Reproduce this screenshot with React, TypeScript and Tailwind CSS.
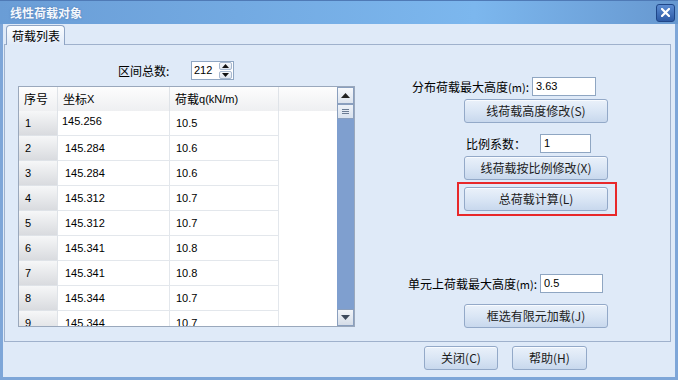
import React from "react"

const rows = [
  ["1", "145.256", "10.5"],
  ["2", "145.284", "10.6"],
  ["3", "145.284", "10.6"],
  ["4", "145.312", "10.7"],
  ["5", "145.312", "10.7"],
  ["6", "145.341", "10.8"],
  ["7", "145.341", "10.8"],
  ["8", "145.344", "10.7"],
  ["9", "145.344", "10.7"],
]

const cjk = "font-['Noto_Sans_CJK_SC','Microsoft_YaHei',sans-serif]"
const num = "font-['Liberation_Sans','Noto_Sans_CJK_SC',sans-serif]"

function Btn({ label, className = "" }: { label: string; className?: string }) {
  return (
    <button
      className={`h-[24px] flex items-center justify-center rounded-[3px] border border-[#93a9c8] bg-gradient-to-b from-[#eaf1fa] via-[#dae6f5] to-[#c8d8ed] text-[12px] text-[#1b1b1b] leading-none shadow-[inset_0_1px_0_#f8fbff] ${cjk} ${className}`}
    >
      {label}
    </button>
  )
}

function Field({ value, className = "" }: { value: string; className?: string }) {
  return (
    <div className={`h-[19px] bg-white border border-[#8fa6c2] flex items-center pl-[3px] text-[11px] text-black ${num} ${className}`}>
      {value}
    </div>
  )
}

export default function App() {
  return (
    <div className="w-[678px] h-[380px] flex flex-col bg-[#5d86bf] overflow-hidden select-none">
      {/* Title bar */}
      <div className="h-[24px] shrink-0 flex items-center justify-between pl-[10px] pr-[3px] border-t border-[#4f7ab6] bg-gradient-to-r from-[#6a9dd6] via-[#7cb7ee] via-70% to-[#6798d0]">
        <span className={`text-[12px] font-bold text-[#f4f8fd] [text-shadow:0_0_2px_#4a74ad] ${cjk}`}>线性荷载对象</span>
        <div className="w-[19px] h-[18px] rounded-[3px] border border-[#1f4688] bg-gradient-to-b from-[#5c8cd2] to-[#2d5aa5] flex items-center justify-center">
          <svg width="9" height="9" viewBox="0 0 9 9">
            <path d="M1 1 L8 8 M8 1 L1 8" stroke="white" strokeWidth="2.2" strokeLinecap="square" />
          </svg>
        </div>
      </div>

      {/* Body */}
      <div className="flex-1 flex flex-col bg-[#dfeaf8] border-x-[3px] border-b-[3px] border-[#7ea6d8]">
        {/* Tab strip */}
        <div className="h-[20px] shrink-0 flex items-end pl-[3px]">
          <div className={`h-[20px] w-[59px] -mb-px z-10 rounded-t-[4px] border border-b-0 border-[#8ea4c4] bg-gradient-to-b from-[#fbfdff] to-[#e0eaf8] flex items-center pl-[5px] text-[12px] text-black ${cjk}`}>
            荷载列表
          </div>
        </div>

        {/* Panel */}
        <div className="h-[298px] shrink-0 ml-px mr-[4px] border border-[#9fb1cc] flex">
          {/* Left: grid */}
          <div className="w-[337px] ml-[13px] flex flex-col">
            <div className="mt-[16px] h-[19px] flex items-center">
              <span className={`ml-[100px] w-[73px] text-[12px] text-black ${cjk}`}>区间总数:</span>
              <div className="w-[43px] h-[19px] bg-white border border-[#8fa6c2] flex items-center justify-between pl-[2px] pr-px">
                <span className={`text-[11px] text-black ${num}`}>212</span>
                <div className="w-[13px] h-[17px] flex flex-col gap-px">
                  <div className="flex-1 rounded-[2px] border border-[#a7b8cf] bg-gradient-to-b from-[#f7f9fc] to-[#dfe6ef] flex items-center justify-center">
                    <svg width="7" height="4" viewBox="0 0 7 4"><path d="M3.5 0 L7 4 L0 4 Z" fill="#111" /></svg>
                  </div>
                  <div className="flex-1 rounded-[2px] border border-[#a7b8cf] bg-gradient-to-b from-[#f7f9fc] to-[#dfe6ef] flex items-center justify-center">
                    <svg width="7" height="4" viewBox="0 0 7 4"><path d="M0 0 L7 0 L3.5 4 Z" fill="#111" /></svg>
                  </div>
                </div>
              </div>
            </div>

            <div className="mt-[6px] h-[241px] border border-[#9aa8bc] bg-white flex overflow-hidden">
              <div className="w-[319px] flex flex-col">
                {/* header */}
                <div className={`h-[24px] shrink-0 flex bg-gradient-to-b from-[#fdfdfd] to-[#eeeff1] text-[12px] text-black ${cjk}`}>
                  <div className="w-[39px] border-r border-[#dfe3e8] flex items-center pl-[5px]">序号</div>
                  <div className="w-[112px] border-r border-[#dfe3e8] flex items-center pl-[5px]">
                    坐标<span className={`text-[11px] ${num}`}>X</span>
                  </div>
                  <div className="w-[109px] border-r border-[#dfe3e8] flex items-center pl-[5px]">
                    荷载<span className={`text-[11px] ${num}`}>q(kN/m)</span>
                  </div>
                </div>
                {rows.map((r, i) => (
                  <div key={r[0]} className={`h-[25px] shrink-0 flex text-[11px] text-black ${num}`}>
                    <div className="w-[39px] border-r border-b border-[#dfe3e8] bg-gradient-to-b from-[#f6f7f8] to-[#d9dbdf] flex items-center pl-[6px]">
                      {r[0]}
                    </div>
                    {i === 0 ? (
                      <div className="w-[112px] border-r border-b border-[#e3e7ec] pl-[4px] pt-[5px] leading-none">{r[1]}</div>
                    ) : (
                      <div className="w-[112px] border-r border-b border-[#e3e7ec] flex items-center pl-[7px]">{r[1]}</div>
                    )}
                    <div className="w-[109px] border-r border-b border-[#e3e7ec] flex items-center pl-[6px]">{r[2]}</div>
                  </div>
                ))}
              </div>
              {/* scrollbar */}
              <div className="w-[17px] ml-auto flex flex-col bg-[#7f9fcf]">
                <div className="h-[17px] border border-[#8a9fbe] bg-gradient-to-b from-[#f7f9fc] to-[#dde4ee] flex items-center justify-center">
                  <svg width="9" height="5" viewBox="0 0 9 5"><path d="M4.5 0 L9 5 L0 5 Z" fill="#222" /></svg>
                </div>
                <div className="h-[15px] border border-[#8a9fbe] bg-gradient-to-b from-[#eef2f8] to-[#d9e2ee] flex flex-col items-center justify-center gap-px">
                  <div className="w-[7px] h-px bg-[#6b7c94]" />
                  <div className="w-[7px] h-px bg-[#6b7c94]" />
                  <div className="w-[7px] h-px bg-[#6b7c94]" />
                </div>
                <div className="flex-1" />
                <div className="h-[17px] border border-[#8a9fbe] bg-gradient-to-b from-[#f2f5f9] to-[#d5dde8] flex items-center justify-center">
                  <svg width="9" height="5" viewBox="0 0 9 5"><path d="M0 0 L9 0 L4.5 5 Z" fill="#3d4a5c" /></svg>
                </div>
              </div>
            </div>
          </div>

          {/* Right: controls */}
          <div className={`ml-[45px] w-[220px] flex flex-col text-[12px] text-black ${cjk}`}>
            <div className="mt-[32px] h-[19px] flex items-center">
              <span className="w-[132px] text-right pr-[3px] whitespace-nowrap">
                分布荷载最大高度<span className="text-[11px]">(m)</span>:
              </span>
              <Field value="3.63" className="w-[64px]" />
            </div>
            <Btn label="线荷载高度修改(S)" className="mt-[3px] ml-[64px] w-[144px]" />

            <div className="mt-[11px] h-[19px] flex items-center">
              <span className="w-[140px] text-right pr-[14px] whitespace-nowrap">比例系数：</span>
              <Field value="1" className="w-[51px]" />
            </div>
            <Btn label="线荷载按比例修改(X)" className="mt-[3px] ml-[64px] w-[144px]" />

            <div className="mt-[2px] ml-[57px] w-[160px] h-[34px] border-2 border-[#e8282a] pl-[5px] pt-[3px]">
              <Btn label="总荷载计算(L)" className="w-[144px]" />
            </div>

            <div className="mt-[58px] h-[19px] flex items-center">
              <span className="w-[140px] text-right pr-[3px] whitespace-nowrap">
                单元上荷载最大高度<span className="text-[11px]">(m)</span>:
              </span>
              <Field value="0.5" className="w-[63px]" />
            </div>
            <Btn label="框选有限元加载(J)" className="mt-[11px] ml-[64px] w-[144px]" />
          </div>
        </div>

        {/* Footer buttons */}
        <div className="mt-[4px] flex">
          <Btn label="关闭(C)" className="ml-[421px] w-[74px]" />
          <Btn label="帮助(H)" className="ml-[14px] w-[75px]" />
        </div>
      </div>
    </div>
  )
}
